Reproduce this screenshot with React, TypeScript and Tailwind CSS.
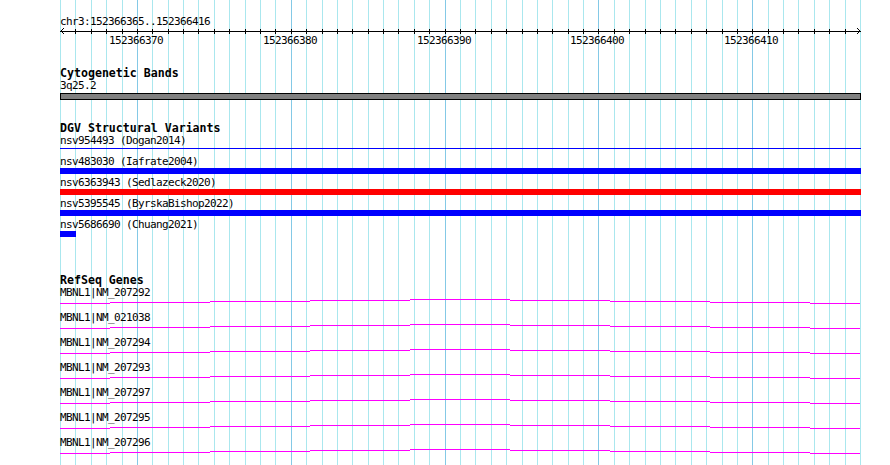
import React from "react";

const XS = Array.from({ length: 53 }, (_, i) => Math.round(60 + (i * 800) / 52));
const MAJOR = [5, 15, 25, 35, 45];
const LABELS = ["152366370", "152366380", "152366390", "152366400", "152366410"];

const GENES = [
  "MBNL1|NM_207292",
  "MBNL1|NM_021038",
  "MBNL1|NM_207294",
  "MBNL1|NM_207293",
  "MBNL1|NM_207297",
  "MBNL1|NM_207295",
  "MBNL1|NM_207296",
];

const SEGS: [number, number, number][] = [
  [0, 50, 4],
  [50, 150, 3],
  [150, 250, 2],
  [250, 350, 1],
  [350, 450, 0],
  [450, 550, 1],
  [550, 650, 2],
  [650, 750, 3],
  [750, 800, 4],
];

const small = "text-[11px] tracking-[-0.62px] leading-[11px] h-[11px] whitespace-pre";
const title = "text-[11.6px] leading-[12px] h-[12px] font-bold whitespace-pre";

function Grid() {
  return (
    <svg
      className="absolute inset-0 pointer-events-none"
      width={890}
      height={465}
      shapeRendering="crispEdges"
    >
      {XS.map((x, i) => (
        <rect
          key={i}
          x={x}
          y={0}
          width={1}
          height={465}
          fill={MAJOR.includes(i) ? "#84c9e6" : "#aae7ee"}
        />
      ))}
    </svg>
  );
}

function Ruler() {
  return (
    <svg width={801} height={8} className="overflow-visible block" shapeRendering="crispEdges">
      <rect x={0} y={4} width={801} height={1} fill="#000" />
      {XS.slice(1, 52).map((x, i) => (
        <rect key={i} x={x - 60} y={2} width={1} height={5} fill="#000" />
      ))}
      <path d="M4 1 L1 4 L4 7" stroke="#000" strokeWidth={1} fill="none" />
      <path d="M797 1 L800 4 L797 7" stroke="#000" strokeWidth={1} fill="none" />
    </svg>
  );
}

function GeneLine() {
  return (
    <svg width={800} height={5} className="block mt-[1px]" shapeRendering="crispEdges">
      {SEGS.map(([a, b, dy], i) => (
        <rect key={i} x={a} y={dy} width={b - a} height={1} fill="#ff00ff" />
      ))}
    </svg>
  );
}

export default function App() {
  return (
    <div className="relative w-[890px] h-[465px] bg-white overflow-hidden text-black font-['DejaVu_Sans_Mono',monospace]">
      <Grid />
      <div className="relative pl-[60px] flex flex-col w-[861px]">
        <div className={`${small} mt-[16px]`}>chr3:152366365..152366416</div>
        <Ruler />
        <div className="relative h-[11px]">
          {MAJOR.map((i, k) => (
            <span
              key={k}
              className="absolute top-0 text-[11px] tracking-[-0.62px] leading-[11px] whitespace-pre"
              style={{ left: XS[i] - 60 - 28 }}
            >
              {LABELS[k]}
            </span>
          ))}
        </div>

        <div className={`${title} mt-[21px]`}>Cytogenetic Bands</div>
        <div className={`${small} mt-[1px]`}>3q25.2</div>
        <div className="mt-[2px] h-[7px] w-[801px] bg-[#808080] border border-black" />

        <div className={`${title} mt-[22px]`}>DGV Structural Variants</div>
        <div className={`${small} mt-[1px]`}>nsv954493 (Dogan2014)</div>
        <div className="mt-[2px] h-[1px] w-[801px] bg-[#0000ff]" />
        <div className={`${small} mt-[7px]`}>nsv483030 (Iafrate2004)</div>
        <div className="mt-[1px] h-[6px] w-[801px] bg-[#0000ff]" />
        <div className={`${small} mt-[3px]`}>nsv6363943 (Sedlazeck2020)</div>
        <div className="mt-[1px] h-[6px] w-[801px] bg-[#ff0000]" />
        <div className={`${small} mt-[3px]`}>nsv5395545 (ByrskaBishop2022)</div>
        <div className="mt-[1px] h-[6px] w-[801px] bg-[#0000ff]" />
        <div className={`${small} mt-[3px]`}>nsv5686690 (Chuang2021)</div>
        <div className="mt-[1px] h-[6px] w-[16px] bg-[#0000ff]" />

        <div className={`${title} mt-[37px]`}>RefSeq Genes</div>
        <div className="mt-[1px] flex flex-col gap-[8px]">
          {GENES.map((g) => (
            <div key={g} className="flex flex-col">
              <div className={small}>{g}</div>
              <GeneLine />
            </div>
          ))}
        </div>
      </div>
    </div>
  );
}
